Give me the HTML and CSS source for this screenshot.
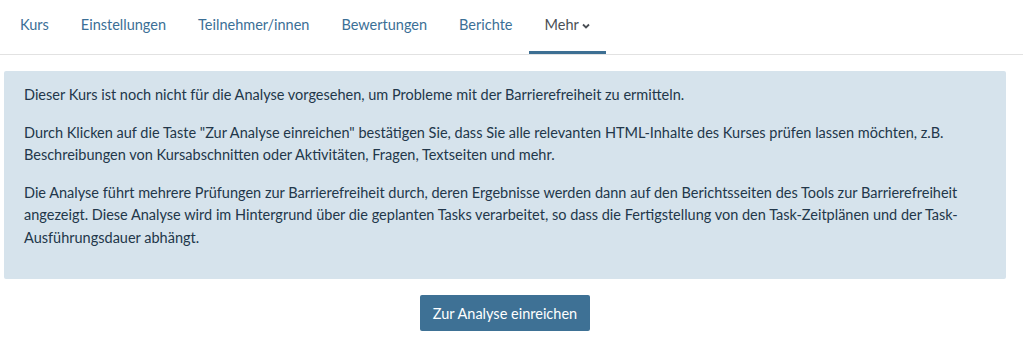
FILE: index.html
```html
<!DOCTYPE html>
<html lang="de">
<head>
    <meta charset="UTF-8">
    <meta name="viewport" content="width=device-width, initial-scale=1.0">
    <title>Barrierefreiheit</title>
    <link rel="stylesheet" href="styles.css">
</head>
<body>
    <nav class="secondary-nav">
        <ul class="nav-list">
            <li><a href="#">Kurs</a></li>
            <li><a href="#">Einstellungen</a></li>
            <li><a href="#">Teilnehmer/innen</a></li>
            <li><a href="#">Bewertungen</a></li>
            <li><a href="#">Berichte</a></li>
            <li><a href="#" class="active">Mehr <svg class="caret" width="8" height="6" viewBox="0 0 8 6"><path d="M1 1.5 L4 4.5 L7 1.5" fill="none" stroke="currentColor" stroke-width="1.8"/></svg></a></li>
        </ul>
    </nav>

    <div class="page">
        <div class="alert">
            <p>Dieser Kurs ist noch nicht für die Analyse vorgesehen, um Probleme mit der Barrierefreiheit zu ermitteln.</p>
            <p>Durch Klicken auf die Taste "Zur Analyse einreichen" bestätigen Sie, dass Sie alle relevanten HTML-Inhalte des Kurses prüfen lassen möchten, z.B. Beschreibungen von Kursabschnitten oder Aktivitäten, Fragen, Textseiten und mehr.</p>
            <p>Die Analyse führt mehrere Prüfungen zur Barrierefreiheit durch, deren Ergebnisse werden dann auf den Berichtsseiten des Tools zur Barrierefreiheit angezeigt. Diese Analyse wird im Hintergrund über die geplanten Tasks verarbeitet, so dass die Fertigstellung von den Task-Zeitplänen und der Task-Ausführungsdauer abhängt.</p>
        </div>
        <div class="actions">
            <button class="btn-primary">Zur Analyse einreichen</button>
        </div>
    </div>
</body>
</html>
```

FILE: styles.css
```css
body {
    font-family: "Source Sans Pro", Lato, "Liberation Sans", sans-serif;
    font-size: 14.5px;
    line-height: 1.6;
    margin: 0;
    background: #fff;
    color: #1d2125;
}
.secondary-nav {
    border-bottom: 1px solid #e2e2e2;
}
.nav-list {
    list-style: none;
    margin: 0;
    padding: 0 0 0 4px;
    display: flex;
}
.nav-list a {
    display: flex;
    align-items: center;
    gap: 3px;
    padding: 14px 16px 15px;
    line-height: 22px;
    color: #3b6f96;
    text-decoration: none;
    border-bottom: 3px solid transparent;
}
.nav-list a.active {
    color: #4a4f55;
    border-bottom-color: #3d6f93;
}
.caret {
    margin-top: 2px;
}
.page {
    padding: 16px 17px 0 4px;
}
.alert {
    background-color: #d6e3ec;
    color: #22374a;
    padding: 13px 20px 15px;
    border-radius: 2px;
}
.alert p {
    margin: 0 0 15px;
    line-height: 22.5px;
}
.actions {
    display: flex;
    justify-content: center;
    margin-top: 16px;
}
.btn-primary {
    font-family: inherit;
    font-size: 14.5px;
    background-color: #3e7195;
    color: #fff;
    border: none;
    border-radius: 2px;
    width: 170px;
    height: 36px;
    cursor: pointer;
}
```
